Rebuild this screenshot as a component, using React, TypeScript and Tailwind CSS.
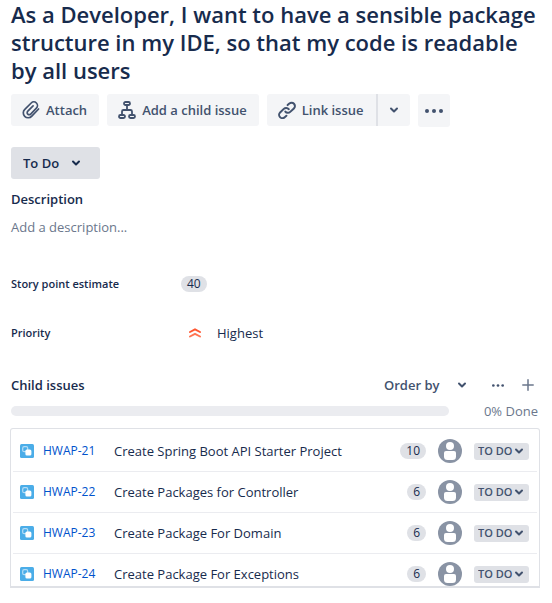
import type { ReactNode } from "react";

type Issue = { id: string; title: string; points: number };

const issues: Issue[] = [
  { id: "HWAP-21", title: "Create Spring Boot API Starter Project", points: 10 },
  { id: "HWAP-22", title: "Create Packages for Controller", points: 6 },
  { id: "HWAP-23", title: "Create Package For Domain", points: 6 },
  { id: "HWAP-24", title: "Create Package For Exceptions", points: 6 },
];

function Chevron({ className = "" }: { className?: string }) {
  return (
    <svg className={`pointer-events-none h-2 w-2.5 ${className}`} viewBox="0 0 10 8" fill="none" stroke="currentColor" strokeWidth="2" strokeLinecap="round" strokeLinejoin="round" aria-hidden="true">
      <path d="M2 2.5 5 5.5 8 2.5" />
    </svg>
  );
}

function AttachIcon() {
  return (
    <svg className="size-[18px]" viewBox="0 0 18 18" fill="none" stroke="currentColor" strokeWidth="1.7" strokeLinecap="round" strokeLinejoin="round" aria-hidden="true">
      <path d="M16.6 8 9.8 15.1a4.8 4.8 0 0 1-7.100.2 4.800 4.800 0 0 1 .1-6.900L9.200 2a3.700 3.700 0 0 1 5.200 0 3.700 3.700 0 0 1 0 5.200L8.700 13.100a2 2 0 0 1-2.900 0 2 2 0 0 1 0-2.900l5.300-5.400" />
    </svg>
  );
}

function ChildIcon() {
  return (
    <svg className="size-[18px]" viewBox="0 0 18 18" fill="none" stroke="currentColor" strokeWidth="1.8" strokeLinejoin="round" aria-hidden="true">
      <rect x="6" y="1" width="6" height="3" rx="1.5" />
      <rect x="1" y="14" width="6" height="3" rx="1.5" />
      <rect x="11" y="14" width="6" height="3" rx="1.5" />
      <path d="M9 4V9M4 14V10.500Q4 9 5.500 9h7Q14 9 14 10.500V14" />
    </svg>
  );
}

function LinkIcon() {
  return (
    <svg className="size-[18px]" viewBox="0 0 18 18" fill="none" stroke="currentColor" strokeWidth="2" strokeLinecap="round" strokeLinejoin="round" aria-hidden="true">
      <path d="M7.3 10.6a3.3 3.3 0 0 0 4.9.3l3.7-3.5a3.3 3.3 0 0 0-4.6-4.8L9.6 4.1" />
      <path d="M10.7 8.2a3.3 3.3 0 0 0-4.9-.3l-3.7 3.5a3.3 3.3 0 0 0 4.6 4.8l1.7-1.5" />
    </svg>
  );
}

function Dots({ className }: { className: string }) {
  return (
    <svg className={className} viewBox="0 0 18 4" fill="currentColor" aria-hidden="true">
      <circle cx="2" cy="2" r="2" />
      <circle cx="9" cy="2" r="2" />
      <circle cx="16" cy="2" r="2" />
    </svg>
  );
}

function SubtaskIcon() {
  return (
    <svg className="size-3.5 shrink-0" viewBox="0 0 14 14" role="img" aria-label="Subtask">
      <rect width="14" height="14" rx="1.5" fill="#4bade8" />
      <rect x="2.7" y="2.7" width="5" height="5" rx="1.5" fill="none" stroke="#b5ddf6" strokeWidth="1.2" />
      <rect x="5.4" y="5.4" width="6" height="6" rx="1.5" fill="#fff" />
    </svg>
  );
}

function Avatar() {
  return (
    <svg className="size-6 shrink-0" viewBox="0 0 24 24" role="img" aria-label="Unassigned">
      <circle cx="12" cy="12" r="12" fill="#8993a4" />
      <circle cx="12" cy="7" r="4" fill="#fff" />
      <path d="M6 14Q6 12 8 12h8q2 0 2 2V17.5Q18 21 14.5 21h-5Q6 21 6 17.5Z" fill="#fff" />
    </svg>
  );
}

function ActionButton({ icon, children, className = "rounded-[3px]" }: { icon: ReactNode; children: ReactNode; className?: string }) {
  return (
    <button type="button" className={`flex h-8 items-center gap-1.5 bg-[#f4f5f7] pr-3 pl-[11px] whitespace-nowrap ${className}`}>
      {icon}
      {children}
    </button>
  );
}

function Points({ value }: { value: number }) {
  return <span className="rounded-full bg-[#dfe1e6] px-1.5 text-xs leading-4 text-[#172b4d]">{value}</span>;
}

function IssueRow({ issue }: { issue: Issue }) {
  return (
    <li className="mx-0.5 flex items-center border-b border-[#ebecf0] py-2 pr-2 pl-[7px] last:border-b-0 last:pb-0">
      <SubtaskIcon />
      <a href={`#${issue.id}`} className="ml-[9px] w-[71px] shrink-0 text-xs text-[#0052cc]">
        {issue.id}
      </a>
      <span className="min-w-0 flex-1 truncate">{issue.title}</span>
      <Points value={issue.points} />
      <span className="mx-3 flex">
        <Avatar />
      </span>
      <span className="relative flex items-center text-[#42526e]">
        <select aria-label={`Status of ${issue.id}`} className="h-[17px] w-[55px] appearance-none rounded-[3px] bg-[#dfe1e6] pl-1 text-[11px] leading-4 font-semibold">
          <option>TO DO</option>
        </select>
        <Chevron className="absolute right-[5px]" />
      </span>
    </li>
  );
}

export default function App() {
  return (
    <main className="bg-white pr-3 pl-[11px] font-['Open_Sans','Noto_Sans',sans-serif] text-[13px] leading-5 text-[#172b4d]">
      <h1 className="text-[22px] leading-7 font-semibold">
        As a Developer, I want to have a sensible package structure in my IDE, so that my code is readable by all users
      </h1>

      <div className="mt-2.5 flex h-[33px] gap-2 font-semibold text-[#42526e]">
        <ActionButton icon={<AttachIcon />}>Attach</ActionButton>
        <ActionButton icon={<ChildIcon />}>Add a child issue</ActionButton>
        <div className="flex">
          <ActionButton icon={<LinkIcon />} className="rounded-l-[3px]">Link issue</ActionButton>
          <button type="button" aria-label="More link options" className="flex h-8 w-[34px] items-center justify-center rounded-r-[3px] border-l-2 border-[#dfe1e6] bg-[#f4f5f7]">
            <Chevron />
          </button>
        </div>
        <button type="button" aria-label="More actions" className="flex w-8 items-center justify-center rounded-[3px] bg-[#f4f5f7]">
          <Dots className="h-1 w-[18px]" />
        </button>
      </div>

      <div className="relative mt-5 flex w-[89px] items-center font-semibold">
        <select aria-label="Status" className="h-8 w-full appearance-none rounded-[3px] bg-[#dfe1e6] pl-3">
          <option>To Do</option>
        </select>
        <Chevron className="absolute right-[19px]" />
      </div>

      <section className="mt-2.5">
        <h2 className="font-semibold">Description</h2>
        <p className="mt-2 text-[#6b778c]">Add a description...</p>
      </section>

      <dl className="mt-[37px]">
        <div className="flex h-5 items-center">
          <dt className="w-[170px] text-[11px] font-semibold">Story point estimate</dt>
          <dd className="flex">
            <Points value={40} />
          </dd>
        </div>
        <div className="mt-[29px] flex h-5 items-center">
          <dt className="w-[170px] text-[11px] font-semibold">Priority</dt>
          <dd className="flex items-center gap-4 pl-2">
            <svg className="h-2.5 w-3" viewBox="0 0 12 10" fill="none" strokeWidth="1.9" strokeLinecap="round" strokeLinejoin="round" aria-hidden="true">
              <path d="M1 4 6 1.3 11 4" stroke="#ff5630" />
              <path d="M1 8.5 6 5.8 11 8.5" stroke="#ff7452" />
            </svg>
            Highest
          </dd>
        </div>
      </dl>

      <section className="mt-8">
        <div className="flex h-5 items-center pr-1.5">
          <h2 className="flex-1 font-semibold">Child issues</h2>
          <div className="relative flex items-center font-semibold text-[#42526e]">
            <select aria-label="Order by" className="w-[83px] appearance-none">
              <option>Order by</option>
            </select>
            <Chevron className="absolute right-0" />
          </div>
          <button type="button" aria-label="Child issue actions" className="ml-[25px] text-[#42526e]">
            <Dots className="h-[3px] w-3" />
          </button>
          <button type="button" aria-label="Create child issue" className="ml-[18px] text-[#6b778c]">
            <svg className="size-3" viewBox="0 0 12 12" stroke="currentColor" strokeWidth="1.5" strokeLinecap="round" aria-hidden="true">
              <path d="M6 .8v10.4M.8 6h10.4" />
            </svg>
          </button>
        </div>
        <div className="mt-1.5 flex items-center">
          <div role="progressbar" aria-label="Child issues done" aria-valuenow={0} aria-valuemin={0} aria-valuemax={100} className="h-2.5 flex-1 rounded-full bg-[#ebecf0]" />
          <span className="w-[91px] pr-0.5 text-right text-[#6b778c]">0% Done</span>
        </div>
        <ul className="mt-[7px] -ml-px rounded-t-[3px] border border-b-2 border-[#dfe1e6] pt-0.5">
          {issues.map((issue) => (
            <IssueRow key={issue.id} issue={issue} />
          ))}
        </ul>
      </section>
    </main>
  );
}
